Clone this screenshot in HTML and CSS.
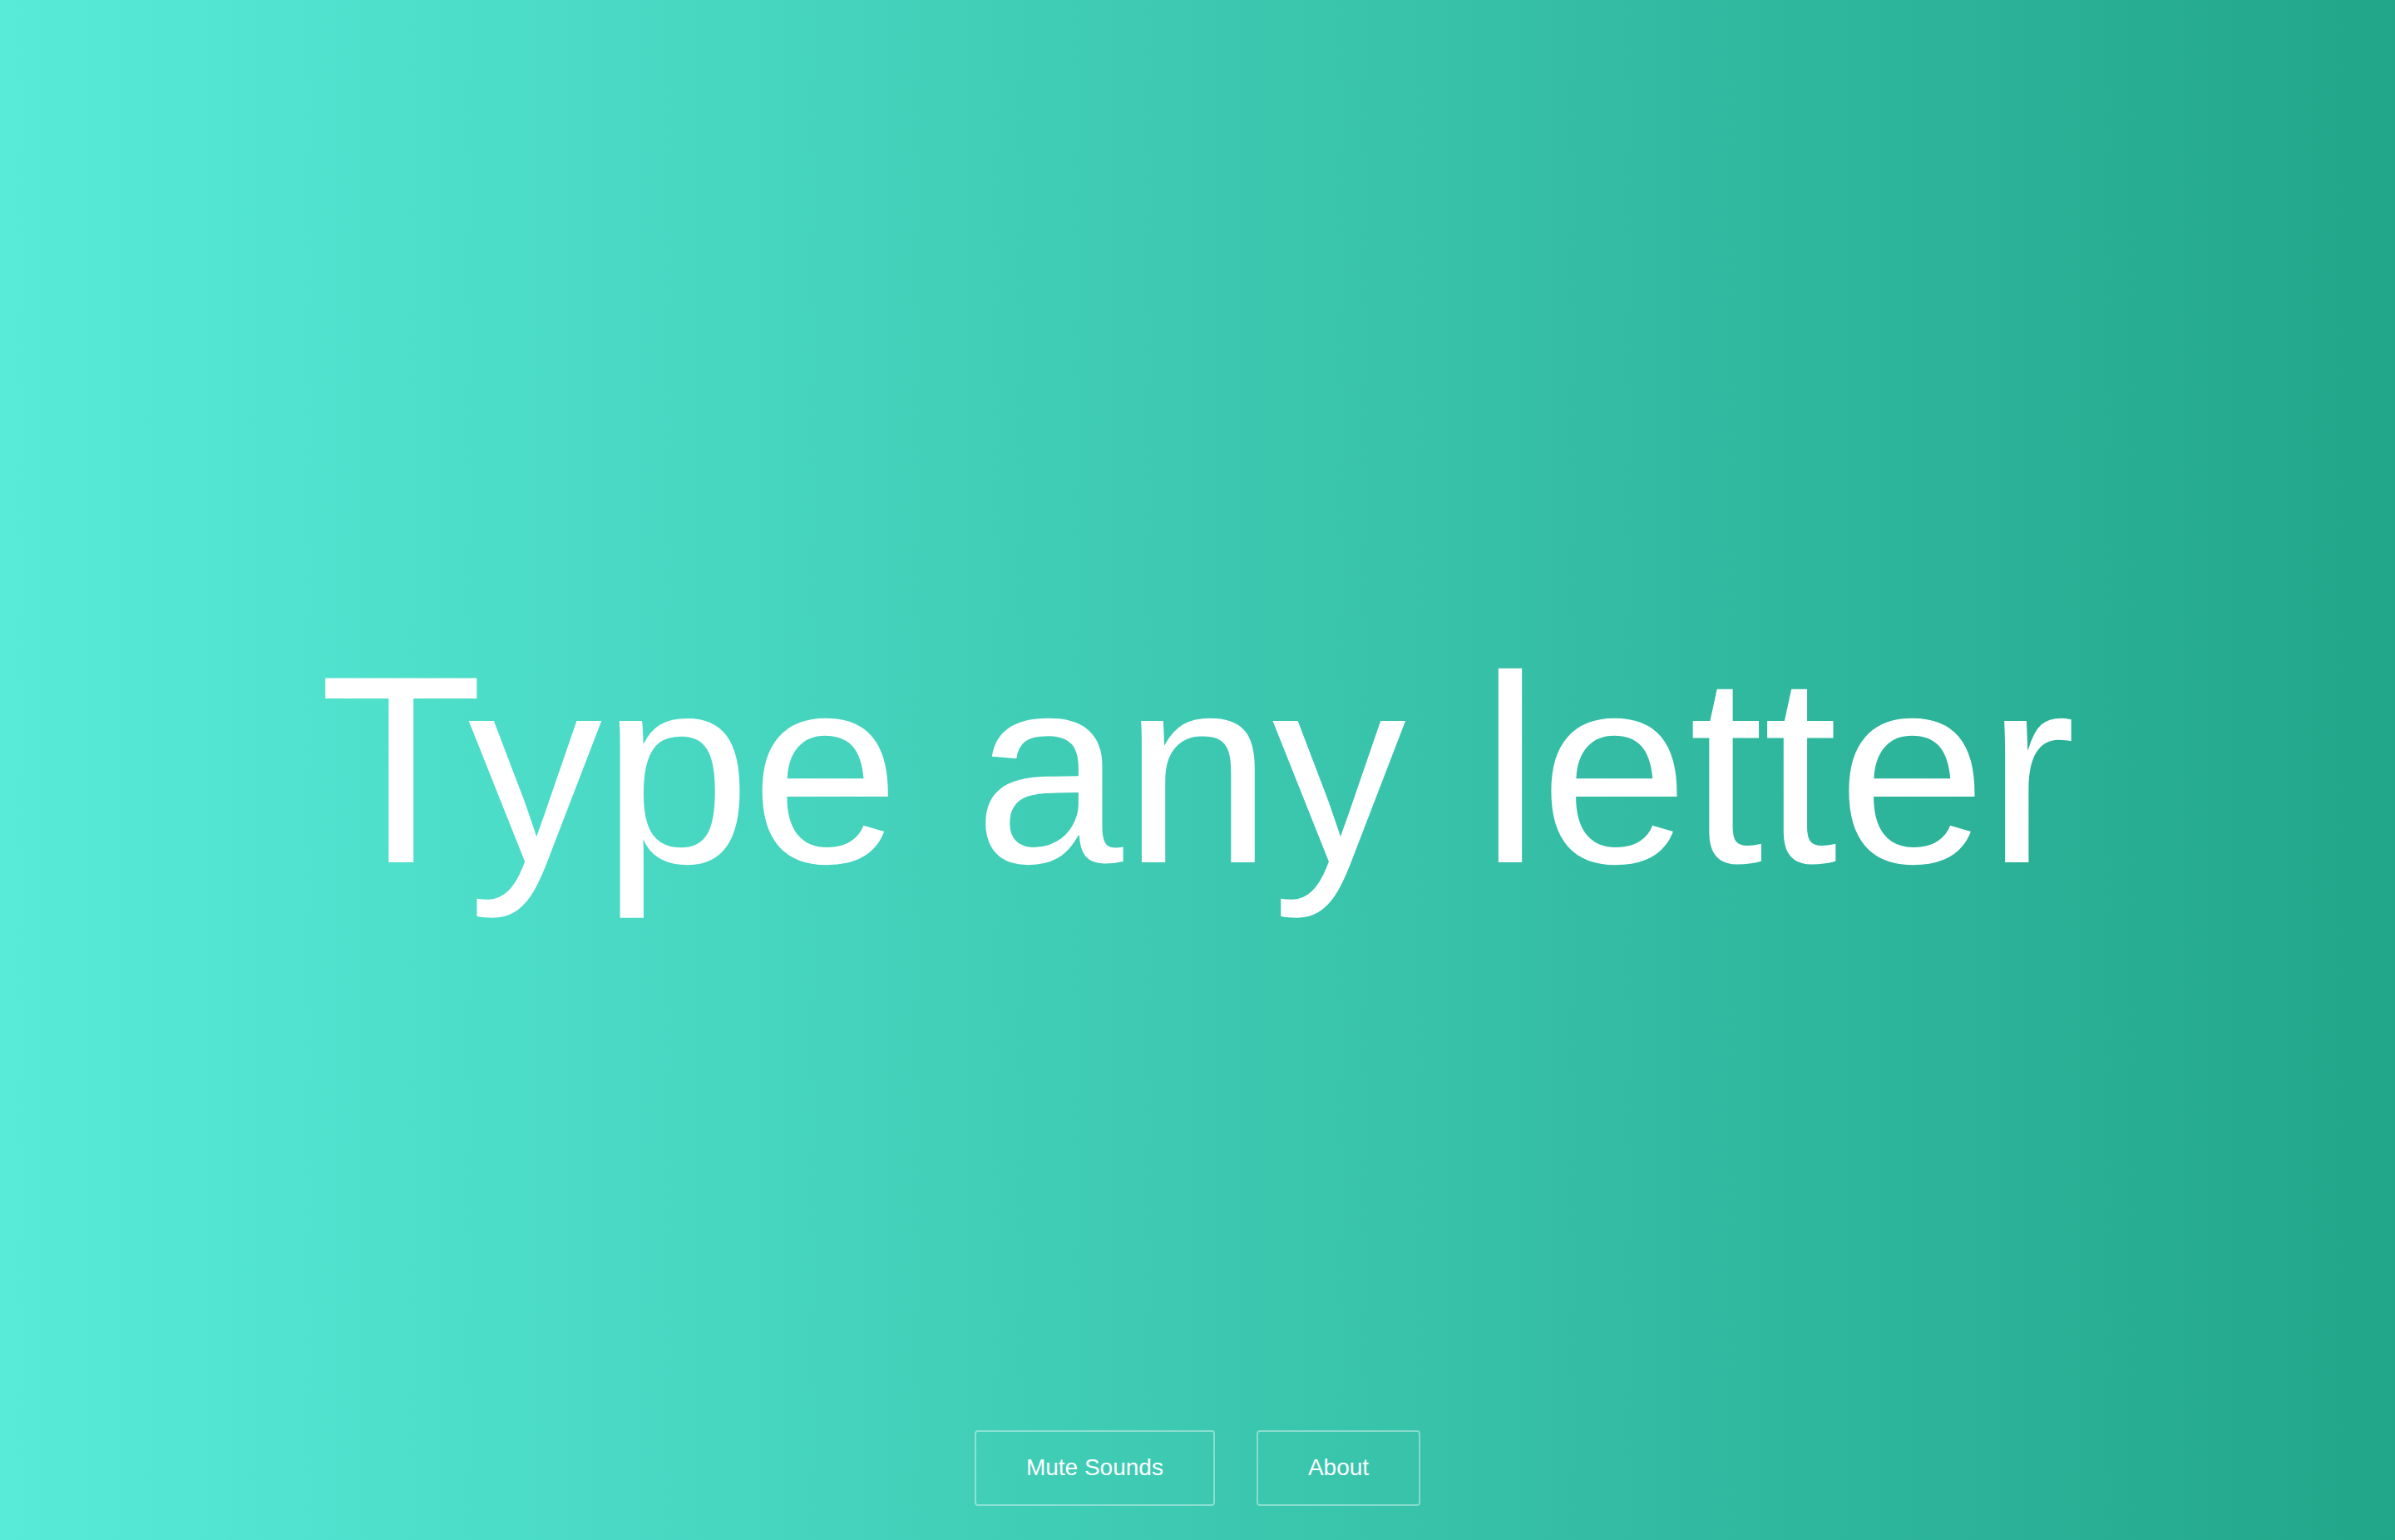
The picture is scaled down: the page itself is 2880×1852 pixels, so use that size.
FILE: index.html
```html
<!DOCTYPE html>
<html lang="en">
<head>
<meta charset="utf-8">
<title>Type any letter</title>
<link rel="stylesheet" href="styles.css">
</head>
<body>
<div class="page">
  <div class="spacer"></div>
  <h1 class="prompt">Type any letter</h1>
  <footer class="controls">
    <button class="btn btn-mute" type="button">Mute Sounds</button>
    <button class="btn btn-about" type="button">About</button>
  </footer>
</div>
</body>
</html>
```
FILE: styles.css
```css
html, body {
  margin: 0;
  padding: 0;
  height: 100%;
}

body {
  font-family: "Liberation Sans", Arial, sans-serif;
  color: #ffffff;
  background: linear-gradient(to right, #57ebd8 0%, #22a68a 100%);
  overflow: hidden;
}

.page {
  height: 100vh;
  display: grid;
  grid-template-rows: 1fr auto 1fr;
}

.prompt {
  margin: 0;
  font-family: "Liberation Sans", Arial, sans-serif;
  font-weight: 400;
  font-size: 322px;
  line-height: normal;
  text-align: center;
  color: #ffffff;
  white-space: nowrap;
}

.controls {
  align-self: end;
  display: flex;
  justify-content: center;
  gap: 50px;
  padding-bottom: 41px;
}

.btn {
  font-family: "Liberation Sans", Arial, sans-serif;
  font-size: 28px;
  line-height: 32px;
  color: #ffffff;
  background: transparent;
  border: 2px solid rgba(255, 255, 255, 0.4);
  border-radius: 4px;
  padding: 27px 60px 28px;
  cursor: pointer;
}
```
